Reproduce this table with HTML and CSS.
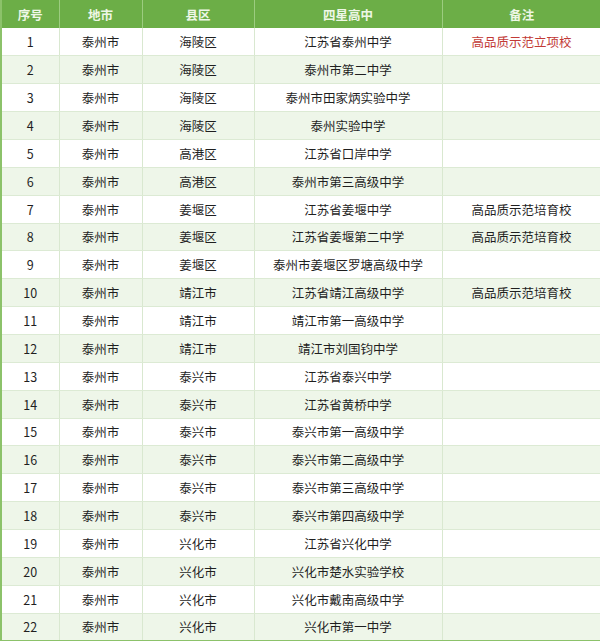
FILE: index.html
```html
<!DOCTYPE html>
<html lang="zh">
<head>
<meta charset="utf-8">
<link rel="stylesheet" href="styles.css">
</head>
<body>
<table class="schools">
<colgroup>
<col class="c1"><col class="c2"><col class="c3"><col class="c4"><col class="c5">
</colgroup>
<thead>
<tr><th>序号</th><th>地市</th><th>县区</th><th>四星高中</th><th>备注</th></tr>
</thead>
<tbody>
<tr><td>1</td><td>泰州市</td><td>海陵区</td><td>江苏省泰州中学</td><td class="red">高品质示范立项校</td></tr>
<tr><td>2</td><td>泰州市</td><td>海陵区</td><td>泰州市第二中学</td><td></td></tr>
<tr><td>3</td><td>泰州市</td><td>海陵区</td><td>泰州市田家炳实验中学</td><td></td></tr>
<tr><td>4</td><td>泰州市</td><td>海陵区</td><td>泰州实验中学</td><td></td></tr>
<tr><td>5</td><td>泰州市</td><td>高港区</td><td>江苏省口岸中学</td><td></td></tr>
<tr><td>6</td><td>泰州市</td><td>高港区</td><td>泰州市第三高级中学</td><td></td></tr>
<tr><td>7</td><td>泰州市</td><td>姜堰区</td><td>江苏省姜堰中学</td><td>高品质示范培育校</td></tr>
<tr><td>8</td><td>泰州市</td><td>姜堰区</td><td>江苏省姜堰第二中学</td><td>高品质示范培育校</td></tr>
<tr><td>9</td><td>泰州市</td><td>姜堰区</td><td>泰州市姜堰区罗塘高级中学</td><td></td></tr>
<tr><td>10</td><td>泰州市</td><td>靖江市</td><td>江苏省靖江高级中学</td><td>高品质示范培育校</td></tr>
<tr><td>11</td><td>泰州市</td><td>靖江市</td><td>靖江市第一高级中学</td><td></td></tr>
<tr><td>12</td><td>泰州市</td><td>靖江市</td><td>靖江市刘国钧中学</td><td></td></tr>
<tr><td>13</td><td>泰州市</td><td>泰兴市</td><td>江苏省泰兴中学</td><td></td></tr>
<tr><td>14</td><td>泰州市</td><td>泰兴市</td><td>江苏省黄桥中学</td><td></td></tr>
<tr><td>15</td><td>泰州市</td><td>泰兴市</td><td>泰兴市第一高级中学</td><td></td></tr>
<tr><td>16</td><td>泰州市</td><td>泰兴市</td><td>泰兴市第二高级中学</td><td></td></tr>
<tr><td>17</td><td>泰州市</td><td>泰兴市</td><td>泰兴市第三高级中学</td><td></td></tr>
<tr><td>18</td><td>泰州市</td><td>泰兴市</td><td>泰兴市第四高级中学</td><td></td></tr>
<tr><td>19</td><td>泰州市</td><td>兴化市</td><td>江苏省兴化中学</td><td></td></tr>
<tr><td>20</td><td>泰州市</td><td>兴化市</td><td>兴化市楚水实验学校</td><td></td></tr>
<tr><td>21</td><td>泰州市</td><td>兴化市</td><td>兴化市戴南高级中学</td><td></td></tr>
<tr><td>22</td><td>泰州市</td><td>兴化市</td><td>兴化市第一中学</td><td></td></tr>
</tbody>
</table>
</body>
</html>
```
FILE: styles.css
```css
html, body {
  margin: 0;
  padding: 0;
  background: #ffffff;
}
body {
  width: 600px;
  height: 641px;
  overflow: hidden;
  font-family: "Microsoft YaHei", "Noto Sans CJK SC", "Noto Sans", sans-serif;
}
.schools {
  width: 600px;
  border-collapse: collapse;
  table-layout: fixed;
  border-left: 2px solid #8cc26a;
  border-bottom: 2px solid #8cc26a;
}
.c1 { width: 58px; }
.c2 { width: 83px; }
.c3 { width: 112px; }
.c4 { width: 188px; }
.c5 { width: 159px; }
.schools th {
  height: 28px;
  padding: 0;
  background: #6cae47;
  color: #eef7e6;
  font-size: 12.5px;
  font-weight: bold;
  text-align: center;
  border-right: 1px solid #9ccc80;
}
.schools th:last-child { border-right: none; }
.schools td {
  height: 27.86px;
  padding: 0;
  font-size: 12.5px;
  color: #1f1f1f;
  text-align: center;
  border-right: 1px solid #d9e8d0;
  border-bottom: 1px solid #dcead4;
  box-sizing: border-box;
}
.schools td:last-child { border-right: 1px solid #e3eedd; }
.schools tbody tr:nth-child(even) td { background: #eef6e9; }
.schools tbody tr:nth-child(odd) td { background: #ffffff; }
.schools td.red { color: #c23a36; }
```
